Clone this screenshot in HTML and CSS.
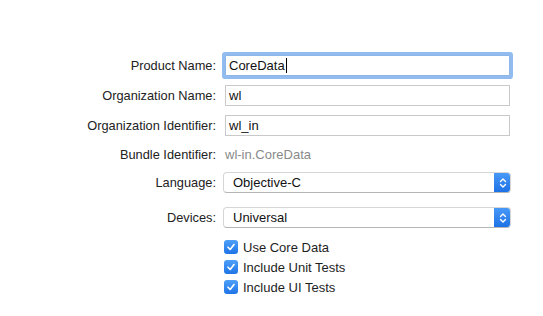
FILE: index.html
```html
<!DOCTYPE html>
<html lang="en">
<head>
  <meta charset="UTF-8">
  <title>Choose options for your new project</title>
  <link rel="stylesheet" href="styles.css">
</head>
<body>
  <!-- Project options form -->
  <div class="options">
    <div class="row">
      <label class="label">Product Name:</label>
      <div class="field focused">CoreData<span class="caret"></span></div>
    </div>
    <div class="row">
      <label class="label">Organization Name:</label>
      <div class="field">wl</div>
    </div>
    <div class="row">
      <label class="label">Organization Identifier:</label>
      <div class="field">wl_in</div>
    </div>
    <div class="row row-text">
      <label class="label">Bundle Identifier:</label>
      <div class="value">wl-in.CoreData</div>
    </div>
    <div class="row row-lang">
      <label class="label">Language:</label>
      <div class="popup">
        <span class="popup-text">Objective-C</span>
        <span class="stepper">
          <svg width="8" height="12" viewBox="0 0 8 12"><path d="M1.5 4.5 L4 2 L6.5 4.5 M1.5 7.5 L4 10 L6.5 7.5" fill="none" stroke="#fff" stroke-width="1.4" stroke-linecap="round" stroke-linejoin="round"/></svg>
        </span>
      </div>
    </div>
    <div class="row row-devices">
      <label class="label">Devices:</label>
      <div class="popup">
        <span class="popup-text">Universal</span>
        <span class="stepper">
          <svg width="8" height="12" viewBox="0 0 8 12"><path d="M1.5 4.5 L4 2 L6.5 4.5 M1.5 7.5 L4 10 L6.5 7.5" fill="none" stroke="#fff" stroke-width="1.4" stroke-linecap="round" stroke-linejoin="round"/></svg>
        </span>
      </div>
    </div>

    <!-- Checkboxes -->
    <div class="checks">
      <div class="check"><span class="box"><svg width="10" height="10" viewBox="0 0 10 10"><path d="M2 5.2 L4.2 7.5 L8 2.5" fill="none" stroke="#fff" stroke-width="1.6" stroke-linecap="round" stroke-linejoin="round"/></svg></span>Use Core Data</div>
      <div class="check"><span class="box"><svg width="10" height="10" viewBox="0 0 10 10"><path d="M2 5.2 L4.2 7.5 L8 2.5" fill="none" stroke="#fff" stroke-width="1.6" stroke-linecap="round" stroke-linejoin="round"/></svg></span>Include Unit Tests</div>
      <div class="check"><span class="box"><svg width="10" height="10" viewBox="0 0 10 10"><path d="M2 5.2 L4.2 7.5 L8 2.5" fill="none" stroke="#fff" stroke-width="1.6" stroke-linecap="round" stroke-linejoin="round"/></svg></span>Include UI Tests</div>
    </div>
  </div>
</body>
</html>
```

FILE: styles.css
```css
* {
  margin: 0;
  padding: 0;
  box-sizing: border-box;
}

body {
  font-family: 'Liberation Sans', Arial, sans-serif;
  font-size: 12.8px;
  color: #262626;
  background: #fff;
  width: 543px;
  height: 316px;
  overflow: hidden;
}

/* Form layout */
.options {
  display: flex;
  flex-direction: column;
  padding-top: 55px;
}

.row {
  display: flex;
  align-items: center;
  gap: 9px;
  height: 21px;
  margin-bottom: 9px;
}

.row-text {
  height: 16px;
  margin-top: 1px;
  margin-bottom: 10px;
}

.row-lang {
  margin-bottom: 14px;
}

.row-devices {
  margin-bottom: 12px;
}

.label {
  width: 216px;
  text-align: right;
  color: #222;
  flex-shrink: 0;
}

/* Text fields */
.field {
  width: 285px;
  height: 21px;
  border: 1px solid #c9c9c9;
  background: #fff;
  padding: 0 3px;
  line-height: 19px;
  color: #111;
  font-size: 13px;
}

.field.focused {
  border-color: #8cb5e8;
  box-shadow: 0 0 0 3px rgba(110, 165, 235, 0.75);
  border-radius: 1px;
}

.caret {
  display: inline-block;
  width: 1px;
  height: 15px;
  background: #000;
  vertical-align: -3px;
  margin-left: 1px;
}

.value {
  color: #8a8a8a;
  font-size: 13px;
}

/* Popup buttons */
.popup {
  width: 288px;
  height: 21px;
  margin-left: -2px;
  display: flex;
  align-items: center;
  justify-content: space-between;
  background: #fff;
  border: 1px solid #d6d6d6;
  border-bottom-color: #b5b5b5;
  border-radius: 4px;
  overflow: hidden;
  font-size: 13px;
  color: #111;
}

.popup-text {
  padding-left: 9px;
}

.stepper {
  width: 17px;
  height: 21px;
  margin-right: -1px;
  display: flex;
  align-items: center;
  justify-content: center;
  background: linear-gradient(#4a9bf8, #1b70e4);
  border-radius: 0 4px 4px 0;
}

/* Checkboxes */
.checks {
  display: flex;
  flex-direction: column;
  gap: 6px;
  padding-left: 224px;
}

.check {
  display: flex;
  align-items: center;
  gap: 5px;
  height: 14px;
  font-size: 13px;
  color: #1e1e1e;
}

.box {
  width: 14px;
  height: 14px;
  border-radius: 3px;
  background: linear-gradient(#4fa0f9, #1f74e6);
  display: flex;
  align-items: center;
  justify-content: center;
}
```
